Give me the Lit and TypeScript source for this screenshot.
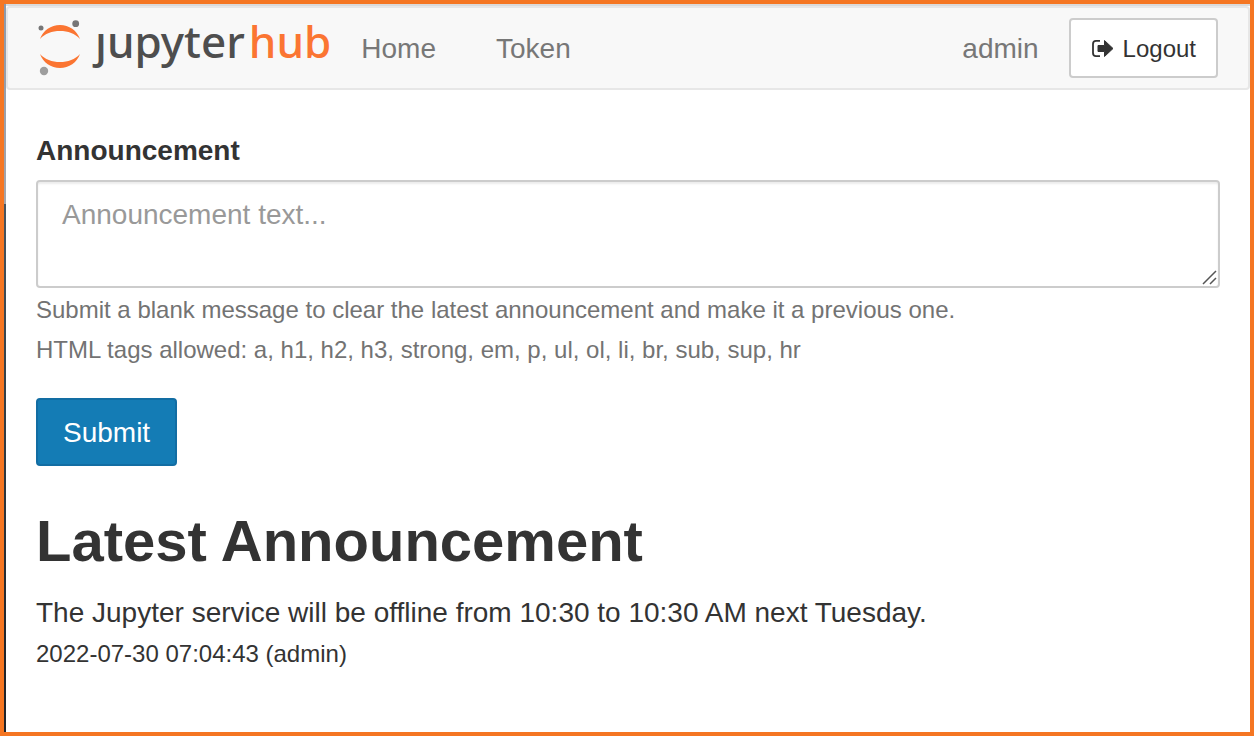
import { LitElement, html, css } from "lit";
import { customElement } from "lit/decorators.js";

@customElement("hub-logo")
class HubLogo extends LitElement {
  static styles = css`
    :host { display: block; }
    .brand { display: flex; align-items: flex-start; gap: 13px; text-decoration: none; }
    .mark { display: block; width: 44px; height: 56px; }
    .word { font: 500 44px/42px "Noto Sans", "Open Sans", sans-serif; color: #4e4e4e; white-space: nowrap; }
    .hub { color: #fb7532; margin-left: 4px; }
  `;
  render() {
    return html`
      <a class="brand" href="#" aria-label="jupyterhub">
        <svg class="mark" viewBox="0 0 44 56" aria-hidden="true">
          <path fill="#fb7532" d="M2 19C5 10.500 13 5 22 5S39 10.500 42 19C37 13.500 30 11 22 11S7 13.500 2 19Z" />
          <path fill="#fb7532" d="M2 34C5 42.500 13 48 22 48S39 42.500 42 34C37 39.500 30 42 22 42S7 39.500 2 34Z" />
          <circle cx="3" cy="8" r="2.500" fill="#767677" />
          <circle cx="37.700" cy="3.700" r="3.400" fill="#767677" />
          <circle cx="6" cy="51" r="4.200" fill="#9e9e9e" />
        </svg>
        <span class="word">ȷupyter<span class="hub">hub</span></span>
      </a>
    `;
  }
}

@customElement("app-root")
class AppRoot extends LitElement {
  static styles = css`
    * { box-sizing: border-box; }
    :host {
      display: flex;
      box-sizing: border-box;
      min-height: 100vh;
      border: 4px solid #f57622;
      background: #fff;
      color: #333;
      font: 28px/40px "Liberation Sans", Arial, sans-serif;
    }
    .edge {
      flex: none;
      width: 2px;
      background: linear-gradient(#8d99aa 0, #a5a5ab 200px, #465562 200px, #35424b 50%, #20242b 90%);
    }
    .page { flex: 1; min-width: 0; border-top: 2px solid #dadada; }
    .navbar {
      display: flex;
      align-items: center;
      min-height: 84px;
      padding: 0 30px;
      background: #f8f8f8;
      border: 2px solid #e7e7e7;
      border-radius: 4px;
    }
    .links { display: flex; flex: 1; gap: 60px; margin-left: 30px; padding-top: 2px; }
    .link { color: #777; text-decoration: none; }
    .session { display: flex; align-items: center; gap: 30px; color: #777; }
    .user { padding-top: 2px; }
    .logout {
      display: flex;
      align-items: center;
      gap: 8px;
      height: 60px;
      padding: 2px 20px 0;
      border: 2px solid #ccc;
      border-radius: 4px;
      background: #fff;
      color: #333;
      font: 24px/36px "Liberation Sans", Arial, sans-serif;
    }
    .exit { display: block; width: 24px; height: 20px; }
    .content { padding: 41px 30px; }
    .label { display: block; font-weight: 700; margin-bottom: 9px; }
    .field { position: relative; }
    .input {
      display: block;
      width: 100%;
      height: 108px;
      padding: 13px 24px;
      border: 2px solid #ccc;
      border-radius: 4px;
      box-shadow: inset 0 2px 2px rgba(0, 0, 0, 0.075);
      background: #fff;
      color: #555;
      font: inherit;
      resize: none;
    }
    .input::placeholder { color: #999; opacity: 1; }
    .grip { position: absolute; right: 2px; bottom: 2px; width: 16px; height: 16px; pointer-events: none; }
    .help { margin: 2px 0 0; font-size: 24px; color: #737373; }
    .submit {
      display: block;
      height: 68px;
      margin: 28px 0 0;
      padding: 2px 25px 0;
      border: 2px solid #126da3;
      border-radius: 4px;
      background: #147cb5;
      color: #fff;
      font: inherit;
    }
    .title { margin: 41px 0 0; font-size: 58px; line-height: 68px; font-weight: 700; }
    .message { margin: 18px 0 0; }
    .meta { margin-top: 1px; font-size: 24px; }
  `;
  render() {
    return html`
      <div class="edge"></div>
      <div class="page">
        <nav class="navbar">
          <hub-logo></hub-logo>
          <div class="links">
            <a class="link" href="#home">Home</a>
            <a class="link" href="#token">Token</a>
          </div>
          <div class="session">
            <span class="user">admin</span>
            <button class="logout" type="button">
              <svg class="exit" viewBox="0 0 24 20" aria-hidden="true">
                <path d="M9 1.800H5Q2 1.800 2 5V14Q2 17.200 5 17.200H9" fill="none" stroke="#333" stroke-width="1.800" />
                <path d="M7 6.500H13.500V1.500L22 9.500L13.500 17.500V12.500H7Z" fill="#333" stroke="#333" stroke-linejoin="round" />
              </svg>
              Logout
            </button>
          </div>
        </nav>
        <main class="content">
          <form @submit=${(e: Event) => e.preventDefault()}>
            <label class="label" for="announcement">Announcement</label>
            <div class="field">
              <textarea class="input" id="announcement" placeholder="Announcement text..."></textarea>
              <svg class="grip" viewBox="0 0 16 16" aria-hidden="true">
                <path d="M1 14L14 1M8 14L14 8" stroke="#555" stroke-width="1.500" />
              </svg>
            </div>
            <p class="help">
              Submit a blank message to clear the latest announcement and make it a previous one.<br />
              HTML tags allowed: a, h1, h2, h3, strong, em, p, ul, ol, li, br, sub, sup, hr
            </p>
            <button class="submit" type="submit">Submit</button>
          </form>
          <h1 class="title">Latest Announcement</h1>
          <p class="message">The Jupyter service will be offline from 10:30 to 10:30 AM next Tuesday.</p>
          <div class="meta">2022-07-30 07:04:43 (admin)</div>
        </main>
      </div>
    `;
  }
}
